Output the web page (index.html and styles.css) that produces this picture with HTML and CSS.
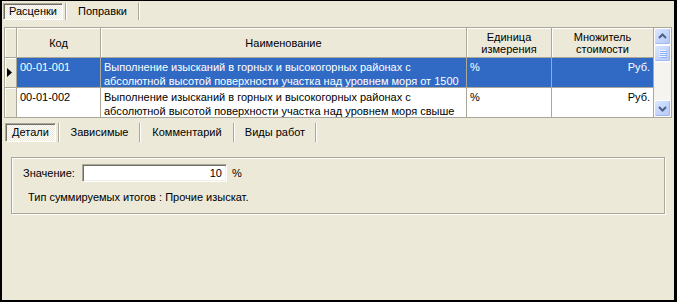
FILE: index.html
```html
<!DOCTYPE html>
<html lang="ru">
  <head>
    <meta charset="UTF-8" />
    <title>Расценки</title>
    <link rel="stylesheet" href="styles.css">
  </head>
  <body>
    <div class="window">
      <div class="tabset tabset-top">
        <div class="tab tab-active tab-prices">Расценки</div>
        <span class="tab-sep"></span>
        <div class="tab tab-fixes">Поправки</div>
        <span class="tab-sep"></span>
      </div>

      <div class="grid">
        <div class="grid-table">
          <div class="grid-row grid-head">
            <div class="cell cell-ind"></div>
            <div class="cell">Код</div>
            <div class="cell">Наименование</div>
            <div class="cell">Единица<br>измерения</div>
            <div class="cell">Множитель<br>стоимости</div>
          </div>
          <div class="grid-row selected">
            <div class="cell cell-ind">
              <svg width="6" height="9" viewBox="0 0 6 9"><polygon points="0,0 5,4.5 0,9" fill="#000"/></svg>
            </div>
            <div class="cell">00-01-001</div>
            <div class="cell">Выполнение изысканий в горных и высокогорных районах с<br>абсолютной высотой поверхности участка над уровнем моря от 1500</div>
            <div class="cell">%</div>
            <div class="cell cell-right">Руб.</div>
          </div>
          <div class="grid-row">
            <div class="cell cell-ind"></div>
            <div class="cell">00-01-002</div>
            <div class="cell">Выполнение изысканий в горных и высокогорных районах с<br>абсолютной высотой поверхности участка над уровнем моря свыше</div>
            <div class="cell">%</div>
            <div class="cell cell-right">Руб.</div>
          </div>
        </div>

        <div class="scrollbar">
          <div class="sb-btn">
            <svg width="15" height="15" viewBox="0 0 15 15"><path d="M4 9 L7.5 5.5 L11 9" fill="none" stroke="#4d6185" stroke-width="2"/></svg>
          </div>
          <div class="sb-btn sb-thumb">
            <span class="grip"></span><span class="grip"></span><span class="grip"></span><span class="grip"></span>
          </div>
          <div class="sb-track"></div>
          <div class="sb-btn">
            <svg width="15" height="15" viewBox="0 0 15 15"><path d="M4 6 L7.5 9.5 L11 6" fill="none" stroke="#4d6185" stroke-width="2"/></svg>
          </div>
        </div>
      </div>

      <div class="tabset tabset-sub">
        <div class="tab tab-active tab-details">Детали</div>
        <span class="tab-sep"></span>
        <div class="tab tab-deps">Зависимые</div>
        <span class="tab-sep"></span>
        <div class="tab tab-comment">Комментарий</div>
        <span class="tab-sep"></span>
        <div class="tab tab-works">Виды работ</div>
        <span class="tab-sep"></span>
      </div>

      <div class="group">
        <div class="field-row">
          <label class="field-label" for="value">Значение:</label>
          <div class="field-input" id="value">10</div>
          <span class="field-unit">%</span>
        </div>
        <div class="summary">Тип суммируемых итогов : Прочие изыскат.</div>
      </div>
    </div>
  </body>
</html>
```

FILE: styles.css
```css
:root {
  --face: #ece9d8;
  --shadow: #aca899;
  --dark-shadow: #716f64;
  --highlight: #316ac5;
}

body {
  margin: 0;
  background-color: #000;
  font-family: "Liberation Sans", Arial, sans-serif;
  font-size: 11px;
  color: #000;
}

.window {
  width: 677px;
  height: 302px;
  box-sizing: border-box;
  border-style: solid;
  border-color: #000;
  border-width: 1px 3px 2px 2px;
  background-color: var(--face);
  overflow: hidden;
}

/* tab strips */

.tabset {
  display: flex;
  align-items: stretch;
}

.tabset-top {
  height: 20px;
  box-sizing: border-box;
  padding: 2px 0 1px 1px;
}

.tabset-sub {
  height: 23px;
  box-sizing: border-box;
  margin-top: 3px;
  padding: 2px 0 2px 3px;
}

.tab {
  display: flex;
  align-items: center;
  justify-content: center;
  box-sizing: border-box;
  line-height: 13px;
}

.tab-active {
  border: 1px solid;
  border-color: var(--shadow) #fff #fff var(--shadow);
  box-shadow: inset 1px 1px 0 var(--dark-shadow);
  background-color: #f5f4ee;
  background-image: repeating-conic-gradient(#ffffff 0 25%, var(--face) 0 50%);
  background-size: 2px 2px;
  margin-right: 2px;
}

.tab-sep {
  width: 1px;
  background-color: var(--shadow);
  border-right: 1px solid #fff;
}

.tab-prices { width: 60px; }
.tab-fixes { width: 71px; }
.tab-details { width: 51px; }
.tab-deps { width: 79px; }
.tab-comment { width: 92px; }
.tab-works { width: 80px; }

/* data grid */

.grid {
  display: flex;
  width: 668px;
  height: 91px;
  box-sizing: border-box;
  margin: 6px 0 0 2px;
  border: 1px solid var(--shadow);
  background-color: #fff;
  overflow: hidden;
}

.grid-table {
  width: 649px;
}

.grid-row {
  display: grid;
  grid-template-columns: 12px 84px 366px 85px 102px;
  height: 30px;
}

.cell {
  box-sizing: border-box;
  padding: 2px 3px 0;
  line-height: 14px;
  white-space: nowrap;
  overflow: hidden;
  border-right: 1px solid var(--shadow);
  border-bottom: 1px solid var(--shadow);
}

.cell-right {
  text-align: right;
}

.grid-head .cell,
.cell-ind {
  background-color: var(--face);
  box-shadow: inset 1px 1px 0 #fff;
}

.grid-head .cell {
  display: flex;
  align-items: center;
  justify-content: center;
  text-align: center;
  line-height: 12px;
  padding: 0 2px;
}

.cell-ind {
  display: flex;
  align-items: center;
  padding: 0 0 0 2px;
}

.selected .cell {
  background-color: var(--highlight);
  color: #fff;
}

.selected .cell-ind {
  background-color: var(--face);
}

/* scroll bar */

.scrollbar {
  width: 17px;
  display: flex;
  flex-direction: column;
  background-color: #f5f4ee;
}

.sb-btn {
  height: 17px;
  flex: none;
  box-sizing: border-box;
  border: 1px solid #fff;
  border-radius: 2px;
  background: linear-gradient(135deg, #dde8fe 0%, #c5d5fc 50%, #b6c9f5 100%);
  box-shadow: inset -1px -1px 0 #a4b9ed;
  display: flex;
  align-items: center;
  justify-content: center;
}

.sb-thumb {
  flex-direction: column;
  gap: 1px;
}

.grip {
  width: 7px;
  height: 1px;
  background-color: #eef4fe;
  box-shadow: 1px 1px 0 #8cb0f8;
}

.sb-track {
  flex: 1;
}

/* details panel */

.group {
  width: 654px;
  height: 57px;
  box-sizing: border-box;
  margin: 13px 0 0 9px;
  padding: 6px 11px 0;
  border: 1px solid var(--shadow);
  box-shadow: inset 1px 1px 0 #fff, 1px 1px 0 #fff;
}

.field-row {
  display: flex;
  align-items: center;
  height: 18px;
}

.field-label {
  width: 59px;
}

.field-input {
  width: 145px;
  height: 18px;
  box-sizing: border-box;
  padding: 0 4px;
  background-color: #fff;
  border: 1px solid;
  border-color: var(--shadow) #fff #fff var(--shadow);
  box-shadow: inset 1px 1px 0 var(--dark-shadow), inset -1px -1px 0 #f1efe2;
  text-align: right;
  line-height: 16px;
}

.field-unit {
  margin-left: 5px;
}

.summary {
  margin: 8px 0 0 5px;
  line-height: 14px;
}
```
